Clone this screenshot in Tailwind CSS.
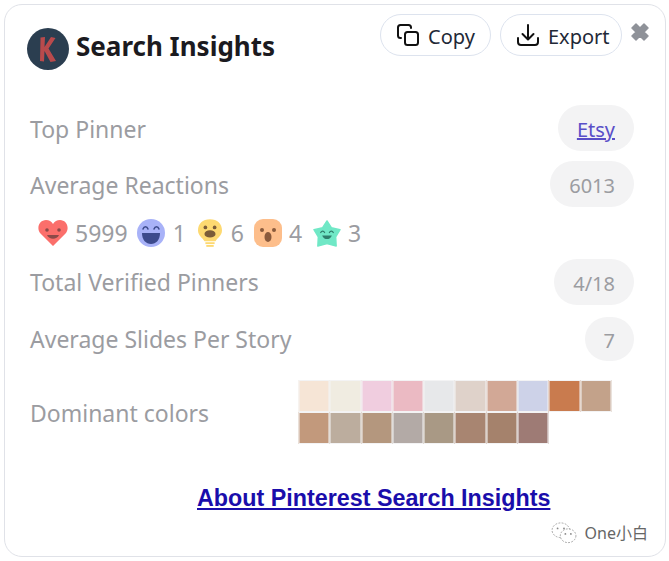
<!DOCTYPE html>
<html lang="en">
<head>
    <meta charset="UTF-8">
    <title>Search Insights</title>
    <script src="https://cdn.jsdelivr.net/npm/@tailwindcss/browser@4"></script>
</head>
<body class="bg-white font-['Noto_Sans','Noto_Sans_CJK_SC',sans-serif]">
    <div class="relative mx-[4px] mt-[4px] w-[662px] h-[553px] border border-[#e0e2e8] rounded-[18px] bg-white overflow-hidden">

        <!-- Header -->
        <div class="flex items-start justify-between pl-[22px] pr-[15px] pt-[9px]">
            <div class="flex items-center gap-[7px] mt-[14px]">
                <svg class="w-[42px] h-[42px]" viewBox="0 0 42 42">
                    <circle cx="21" cy="21" r="21" fill="#2b3e50"/>
                    <path d="M13.5 9.5 L18 9 L17.5 19 L24 9 L28.5 10 L21.5 20.5 L29 33 L23.5 34 L17.5 23 L17 33.5 L13 33 Z" fill="#b94a4c"/>
                </svg>
                <h1 class="text-[26px] leading-[34px] font-bold text-[#1b1a20] pb-[6px]">Search Insights</h1>
            </div>
            <div class="flex items-start gap-[9px]">
                <button class="flex items-center gap-[8px] h-[42px] w-[111px] pl-[15px] rounded-full border border-[#dde3ee] text-[20px] text-[#1f2937]">
                    <svg class="w-[24px] h-[24px]" viewBox="0 0 24 24" fill="none" stroke="#111" stroke-width="2" stroke-linejoin="round" stroke-linecap="round">
                        <rect x="9" y="9" width="13" height="13" rx="2.5"/>
                        <path d="M5 15H4.5A2.5 2.5 0 0 1 2 12.5V4.5A2.5 2.5 0 0 1 4.5 2H12.5A2.5 2.5 0 0 1 15 4.5V5"/>
                    </svg>
                    <span class="pt-[3px]">Copy</span>
                </button>
                <button class="flex items-center gap-[8px] h-[42px] w-[122px] pl-[15px] rounded-full border border-[#dde3ee] text-[20px] text-[#1f2937]">
                    <svg class="w-[24px] h-[24px]" viewBox="0 0 24 24" fill="none" stroke="#111" stroke-width="2" stroke-linecap="round" stroke-linejoin="round">
                        <path d="M2 15v4a3 3 0 0 0 3 3h14a3 3 0 0 0 3-3v-4"/>
                        <path d="M12 2v14M6.5 11l5.5 5.5 5.5-5.5"/>
                    </svg>
                    <span class="pt-[3px]">Export</span>
                </button>
                <svg class="w-[20px] h-[20px] mt-[8px] -ml-[1px]" viewBox="0 0 20 20">
                    <path d="M2 6 L6 2 L10 6 L14 2 L18 6 L14 10 L18 14 L14 18 L10 14 L6 18 L2 14 L6 10 Z" fill="#8f9299" stroke="#8f9299" stroke-width="1.5" stroke-linejoin="round"/>
                </svg>
            </div>
        </div>

        <!-- Stats -->
        <div class="pl-[25px] pr-[31px] mt-[35px] text-[23px] text-[#9b9ca1]">
            <div class="flex items-center justify-between h-[46px]">
                <span class="pt-[2px]">Top Pinner</span>
                <a href="#" class="flex items-center h-[46px] pt-[4px] pl-[19px] pr-[19px] rounded-full bg-[#f3f3f4] text-[20px] text-[#5a4fc8] underline">Etsy</a>
            </div>
            <div class="flex items-center justify-between h-[46px] mt-[10px]">
                <span class="pt-[2px]">Average Reactions</span>
                <span class="flex items-center h-[46px] pt-[4px] px-[19px] rounded-full bg-[#f3f3f4] text-[20px]">6013</span>
            </div>

            <!-- Reactions -->
            <div class="flex items-center h-[36px] mt-[8px] pl-[8px]">
                <svg class="w-[30px] h-[26px]" viewBox="1 2 30 26">
                    <path d="M16 28 L3 15 C-1 9 3 2 9 2 C12 2 14.500 3.500 16 6 C17.500 3.500 20 2 23 2 C29 2 33 9 29 15 Z" fill="#fb6f6b"/>
                    <circle cx="10" cy="12" r="1.800" fill="#8c4a48"/>
                    <circle cx="22" cy="12" r="1.800" fill="#8c4a48"/>
                    <path d="M10 17 C12 22 20 22 22 17 Z" fill="#8c4a48"/>
                </svg>
                <span class="ml-[7px]">5999</span>
                <svg class="w-[28px] h-[28px] ml-[9px]" viewBox="0 0 28 28">
                    <circle cx="14" cy="14" r="14" fill="#a8b2f8"/>
                    <path d="M6 10 C7 7 10 7 11 10 M17 10 C18 7 21 7 22 10" fill="none" stroke="#3c4a8c" stroke-width="1.500" stroke-linecap="round"/>
                    <path d="M5 14 H23 C23 21 19 25 14 25 C9 25 5 21 5 14 Z" fill="#3c4a8c"/>
                </svg>
                <span class="ml-[8px]">1</span>
                <svg class="w-[24px] h-[30px] ml-[12px]" viewBox="0 0 26 30">
                    <path d="M13 0 C21 0 26 5 26 12 C26 18 21 20 19 24 H7 C5 20 0 18 0 12 C0 5 5 0 13 0 Z" fill="#fdd971"/>
                    <rect x="8" y="25" width="10" height="2" fill="#fdd971"/>
                    <rect x="9" y="28" width="8" height="2" fill="#fdd971"/>
                    <circle cx="8" cy="9" r="2" fill="#7b5c38"/>
                    <circle cx="18" cy="9" r="2" fill="#7b5c38"/>
                    <ellipse cx="13" cy="16" rx="6" ry="4" fill="#7b5c38"/>
                </svg>
                <span class="ml-[9px]">6</span>
                <svg class="w-[28px] h-[28px] ml-[10px]" viewBox="0 0 28 28">
                    <rect width="28" height="28" rx="9" fill="#fdbe8b"/>
                    <circle cx="8" cy="11" r="2" fill="#8a5a3c"/>
                    <circle cx="20" cy="11" r="2" fill="#8a5a3c"/>
                    <ellipse cx="14" cy="18" rx="3.500" ry="5" fill="#8a5a3c"/>
                </svg>
                <span class="ml-[7px]">4</span>
                <svg class="w-[28px] h-[27px] ml-[11px]" viewBox="0 0 29 28">
                    <path d="M14.500 1 L19 8 L28 10 L23.500 17.500 L24 27 L14.500 24.500 L5 27 L5.500 17.500 L1 10 L10 8 Z" fill="#70e8c6" stroke="#70e8c6" stroke-width="1.500" stroke-linejoin="round"/>
                    <path d="M8 13 C9 11 11 11 12 13 M17 13 C18 11 20 11 21 13" fill="none" stroke="#2f7f6c" stroke-width="1.300" stroke-linecap="round"/>
                    <path d="M9.500 16 C11 21 18 21 19.500 16 Z" fill="#2f7f6c"/>
                </svg>
                <span class="ml-[7px]">3</span>
            </div>

            <div class="flex items-center justify-between h-[46px] mt-[8px]">
                <span>Total Verified Pinners</span>
                <span class="flex items-center h-[46px] pt-[3px] px-[19px] rounded-full bg-[#f3f3f4] text-[20px]">4/18</span>
            </div>
            <div class="flex items-center justify-between h-[44px] mt-[12px]">
                <span>Average Slides Per Story</span>
                <span class="flex items-center h-[44px] pt-[3px] px-[19px] rounded-full bg-[#f3f3f4] text-[20px]">7</span>
            </div>

            <!-- Dominant colors -->
            <div class="flex items-center justify-between mt-[19px]">
                <span class="pt-[2px]">Dominant colors</span>
                <div class="grid grid-cols-[repeat(10,31.300px)] w-[313px] mr-[22px] -translate-x-[0.5px]">
                    <div class="h-[32px] border border-[#f3f3f4] bg-[#f6e5d6]"></div>
                    <div class="h-[32px] border border-[#f3f3f4] bg-[#f0ece1]"></div>
                    <div class="h-[32px] border border-[#f3f3f4] bg-[#f0cddf]"></div>
                    <div class="h-[32px] border border-[#f3f3f4] bg-[#ebbac3]"></div>
                    <div class="h-[32px] border border-[#f3f3f4] bg-[#e7e8ea]"></div>
                    <div class="h-[32px] border border-[#f3f3f4] bg-[#dfd2ca]"></div>
                    <div class="h-[32px] border border-[#f3f3f4] bg-[#d2a896]"></div>
                    <div class="h-[32px] border border-[#f3f3f4] bg-[#cdd2e8]"></div>
                    <div class="h-[32px] border border-[#f3f3f4] bg-[#c97b4e]"></div>
                    <div class="h-[32px] border border-[#f3f3f4] bg-[#c3a28a]"></div>
                    <div class="h-[32px] border border-[#f3f3f4] bg-[#c2997c]"></div>
                    <div class="h-[32px] border border-[#f3f3f4] bg-[#bcad9e]"></div>
                    <div class="h-[32px] border border-[#f3f3f4] bg-[#b4977e]"></div>
                    <div class="h-[32px] border border-[#f3f3f4] bg-[#b3aaa6]"></div>
                    <div class="h-[32px] border border-[#f3f3f4] bg-[#a99985]"></div>
                    <div class="h-[32px] border border-[#f3f3f4] bg-[#a88571]"></div>
                    <div class="h-[32px] border border-[#f3f3f4] bg-[#a5826c]"></div>
                    <div class="h-[32px] border border-[#f3f3f4] bg-[#9e7b75]"></div>
                </div>
            </div>
        </div>

        <!-- Footer link -->
        <div class="mt-[38px] pl-[192px]">
            <a href="#" class="font-['Liberation_Sans',sans-serif] font-bold text-[23.300px] leading-[32px] text-[#1a0dab] underline">About Pinterest Search Insights</a>
        </div>

        <!-- Watermark -->
        <div class="absolute right-[17px] bottom-[12px] flex items-center gap-[8px] text-[16px] leading-[20px] text-[#666]">
            <svg class="w-[26px] h-[22px]" viewBox="0 0 28 24" fill="#fff" stroke="#888" stroke-width="0.800" stroke-dasharray="2 1.500">
                <ellipse cx="10.500" cy="9" rx="9.500" ry="8"/>
                <ellipse cx="18.500" cy="15" rx="8.500" ry="7.500"/>
                <circle cx="7" cy="7" r="1" fill="#888" stroke="none"/>
                <circle cx="14" cy="7" r="1" fill="#888" stroke="none"/>
                <circle cx="15.500" cy="13" r="1" fill="#888" stroke="none"/>
                <circle cx="21.500" cy="13" r="1" fill="#888" stroke="none"/>
            </svg>
            <span>One小白</span>
        </div>
    </div>
</body>
</html>
